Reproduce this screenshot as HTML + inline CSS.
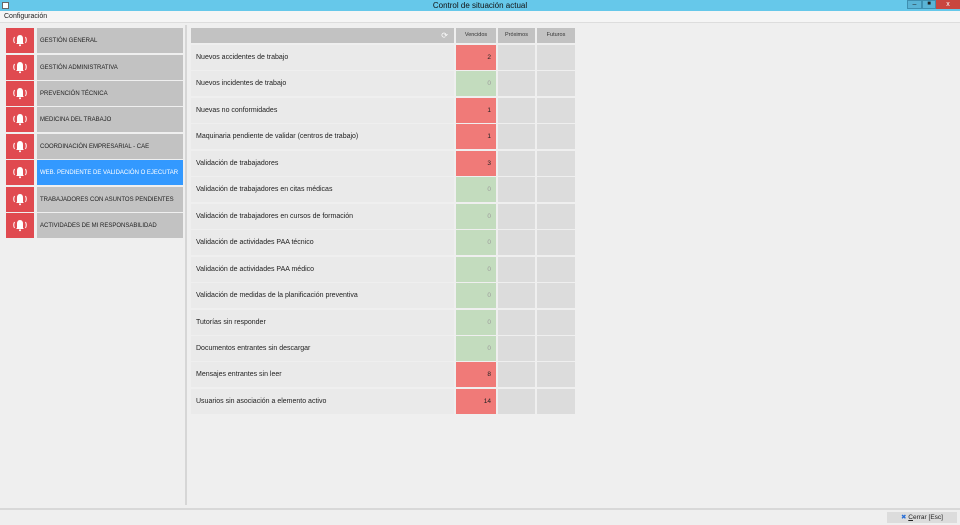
<!DOCTYPE html>
<html><head><meta charset="utf-8"><style>
*{margin:0;padding:0;box-sizing:border-box}
body{width:960px;height:525px;background:#efefef;font-family:"Liberation Sans",sans-serif;position:relative;overflow:hidden;color:#222}
.abs{position:absolute}
.tb{left:0;top:0;width:960px;height:11px;background:#66c8ea;font-size:8px;text-align:center;line-height:11px;color:#111}
.menu{left:0;top:11px;width:960px;height:12px;font-size:7px;line-height:12px;padding-left:4px;background:#f5f5f5;border-bottom:1px solid #ddd}
.btn{left:6px;width:177px;height:25px}
.ic{position:absolute;left:0;top:0;width:28px;height:25px;background:#e04a50}
.lb{position:absolute;left:31px;top:0;right:0;height:25px;background:#c2c2c2;font-size:6px;line-height:26px;padding-left:3px;color:#222}
.sel .lb{background:#3399ff;color:#fff}
.row{left:191px;width:384px;height:25px}
.rl{position:absolute;left:0;top:0;width:263px;height:25px;background:#eaeaea;font-size:7px;line-height:25px;padding-left:5px}
.c{position:absolute;top:0;height:25px;background:#dcdcdc}
.v{left:265px;width:40px;font-size:6.5px;text-align:right;padding-right:5px;line-height:25px}
.p{left:307px;width:37px}.f{left:346px;width:38px}
.red{background:#f07a78;color:#222}.grn{background:#c3dcbe;color:#9a9a9a}
.hd{top:28px;height:15px;background:#c2c2c2;font-size:5.5px;line-height:15px;text-align:center;color:#333}
</style></head><body>
<div class="abs tb">Control de situación actual</div>
<div class="abs" style="left:2px;top:2px;width:7px;height:7px;background:#fff;border:1px solid #666"></div>
<div class="abs" style="left:907px;top:0;width:15px;height:9px;background:#5ab4d6;border:1px solid #3f8fb0;font-size:7px;text-align:center;line-height:7px">–</div>
<div class="abs" style="left:922px;top:0;width:14px;height:9px;background:#5ab4d6;border:1px solid #3f8fb0;font-size:6px;text-align:center;line-height:7px">■</div>
<div class="abs" style="left:936px;top:0;width:24px;height:9px;background:#c9463f;font-size:7px;color:#fff;text-align:center;line-height:9px">x</div>
<div class="abs menu">Configuración</div>

<div class="abs btn" style="top:28px"><div class="ic"></div><div class="lb">GESTIÓN GENERAL</div></div>
<div class="abs btn" style="top:55px"><div class="ic"></div><div class="lb">GESTIÓN ADMINISTRATIVA</div></div>
<div class="abs btn" style="top:81px"><div class="ic"></div><div class="lb">PREVENCIÓN TÉCNICA</div></div>
<div class="abs btn" style="top:107px"><div class="ic"></div><div class="lb">MEDICINA DEL TRABAJO</div></div>
<div class="abs btn" style="top:134px"><div class="ic"></div><div class="lb">COORDINACIÓN EMPRESARIAL - CAE</div></div>
<div class="abs btn sel" style="top:160px"><div class="ic"></div><div class="lb">WEB. PENDIENTE DE VALIDACIÓN O EJECUTAR</div></div>
<div class="abs btn" style="top:187px"><div class="ic"></div><div class="lb">TRABAJADORES CON ASUNTOS PENDIENTES</div></div>
<div class="abs btn" style="top:213px"><div class="ic"></div><div class="lb">ACTIVIDADES DE MI RESPONSABILIDAD</div></div>

<div class="abs" style="left:185px;top:25px;width:2px;height:480px;background:#d6d6d6"></div>

<div class="abs hd" style="left:191px;width:263px"><span style="position:absolute;right:6px;color:#fff;font-size:8px">⟳</span></div>
<div class="abs hd" style="left:456px;width:40px">Vencidos</div>
<div class="abs hd" style="left:498px;width:37px">Próximos</div>
<div class="abs hd" style="left:537px;width:38px">Futuros</div>

<div id="rows"></div>
<script>
var d=[["Nuevos accidentes de trabajo",2],["Nuevos incidentes de trabajo",0],["Nuevas no conformidades",1],["Maquinaria pendiente de validar (centros de trabajo)",1],["Validación de trabajadores",3],["Validación de trabajadores en citas médicas",0],["Validación de trabajadores en cursos de formación",0],["Validación de actividades PAA técnico",0],["Validación de actividades PAA médico",0],["Validación de medidas de la planificación preventiva",0],["Tutorías sin responder",0],["Documentos entrantes sin descargar",0],["Mensajes entrantes sin leer",8],["Usuarios sin asociación a elemento activo",14]];
var h="";d.forEach(function(r,i){var y=Math.round(45+i*26.45);h+='<div class="abs row" style="top:'+y+'px"><div class="rl">'+r[0]+'</div><div class="c v '+(r[1]?'red':'grn')+'">'+r[1]+'</div><div class="c p"></div><div class="c f"></div></div>';});
document.getElementById("rows").innerHTML=h;
var ic=document.querySelectorAll(".ic");ic.forEach(function(e){e.innerHTML='<svg width="28" height="25" viewBox="0 0 28 25"><path d="M11 15 L11 11 Q11 7 14 7 Q17 7 17 11 L17 15 L18 16 L10 16 Z" fill="#fff"/><circle cx="14" cy="17.3" r="1" fill="#fff"/><path d="M8.5 9 Q7 12 8.5 15 M19.5 9 Q21 12 19.5 15" stroke="#fff" stroke-width="1" fill="none"/></svg>';});
</script>
<div class="abs" style="left:0;top:508px;width:960px;height:2px;background:#d8d8d8"></div>
<div class="abs" style="left:887px;top:512px;width:70px;height:11px;background:#dcdcdc;font-size:6.5px;line-height:11px;text-align:center"><span style="color:#2a6fd6">✖</span> <u>C</u>errar [Esc]</div>
</body></html>
